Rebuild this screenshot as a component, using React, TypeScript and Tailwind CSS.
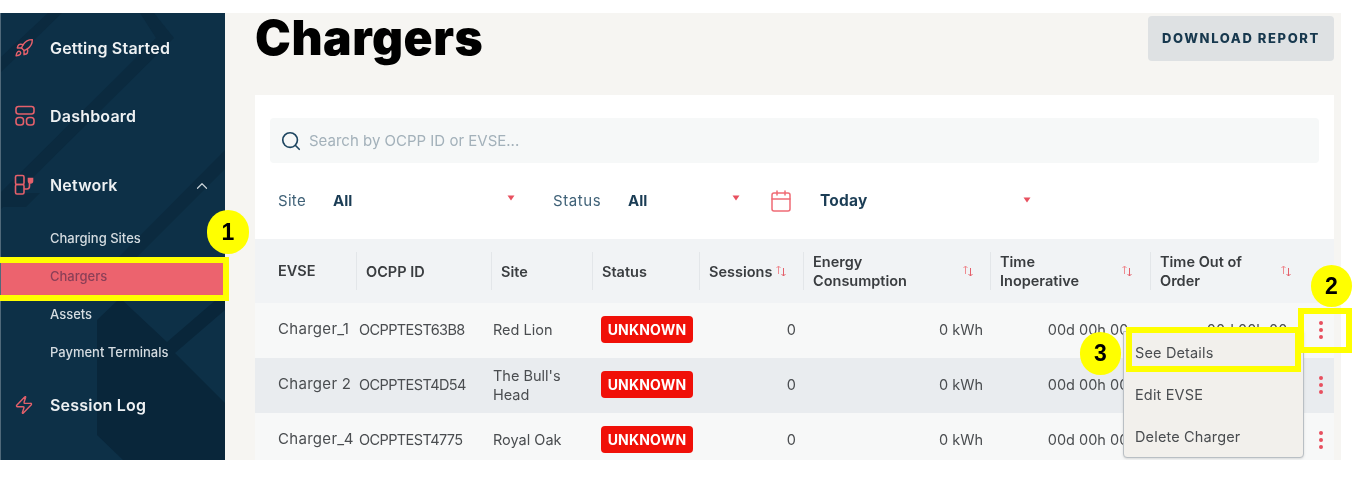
import React from "react";
import { Rocket, Zap, ChevronUp, Search, Calendar } from "lucide-react";

const font = { fontFamily: "Inter, 'Open Sans', sans-serif" };

function DashIcon() {
  return (
    <svg width="22" height="22" viewBox="0 0 22 22" fill="none" stroke="#e4606b" strokeWidth="1.6">
      <rect x="2" y="1.5" width="18" height="7.5" rx="2.5" />
      <rect x="2" y="12.5" width="7.5" height="7.5" rx="2.8" />
      <rect x="12.5" y="12.5" width="7.5" height="7.5" rx="2.8" />
    </svg>
  );
}
function NetworkIcon() {
  return (
    <svg width="22" height="22" viewBox="0 0 22 22" fill="none" stroke="#e4606b" strokeWidth="1.6">
      <rect x="1.5" y="1.5" width="8.5" height="9" rx="1.5" />
      <rect x="1.5" y="10.5" width="8.5" height="9.5" rx="1.5" />
      <path d="M10 15h3c2 0 2.5-1.5 2.5-3V9" />
      <path d="M14.5 4.5h4v2.5a2 2 0 0 1-4 0z" fill="#e4606b" />
    </svg>
  );
}
function SortIcon() {
  return (
    <svg width="12" height="14" viewBox="0 0 12 14" fill="none" strokeWidth="1">
      <path d="M3.5 10V2M1.5 4l2-2 2 2" stroke="#ef8a90" />
      <path d="M8.5 4v8M6.5 10l2 2 2-2" stroke="#e4606b" />
    </svg>
  );
}
function Caret({ className }: { className: string }) {
  return (
    <svg className={className} width="8" height="6" viewBox="0 0 8 6">
      <path d="M0.5 0.5h7L4 5.5z" fill="#e8505f" />
    </svg>
  );
}
function Dots() {
  return (
    <div className="flex flex-col gap-[3px] items-center">
      <span className="w-[4px] h-[4px] rounded-full bg-[#e8505f]" />
      <span className="w-[4px] h-[4px] rounded-full bg-[#e8505f]" />
      <span className="w-[4px] h-[4px] rounded-full bg-[#e8505f]" />
    </div>
  );
}
function Marker({ n, className }: { n: string; className: string }) {
  return (
    <div className={`absolute rounded-full bg-[#ffff00] flex items-center justify-center text-black text-[23px] font-bold ${className}`} style={{ fontFamily: "'Liberation Sans', sans-serif" }}>
      {n}
    </div>
  );
}

const GRID = "grid grid-cols-[101px_135px_101px_107px_104px_187px_160px_158px_26px] items-center";

function HeadCell({ children, sort, pl }: { children: React.ReactNode; sort?: string; pl: string }) {
  return (
    <div className={`relative h-[38px] flex items-center border-l border-[#e3e6e9] ${pl} text-[14.5px] leading-[19px] font-semibold text-[#3a3d40]`}>
      <span>{children}</span>
      {sort && <span className={`absolute top-1/2 -translate-y-1/2 ${sort}`}><SortIcon /></span>}
    </div>
  );
}

const rows = [
  { evse: "Charger_1", id: "OCPPTEST63B8", site: "Red Lion", bg: "bg-[#f7f8f8]" },
  { evse: "Charger 2", id: "OCPPTEST4D54", site: "The Bull's Head", bg: "bg-[#e9ecef]" },
  { evse: "Charger_4", id: "OCPPTEST4775", site: "Royal Oak", bg: "bg-[#f7f8f8]" },
];

function NavMain({ icon, label, right }: { icon: React.ReactNode; label: string; right?: React.ReactNode }) {
  return (
    <div className="h-[68px] flex items-center relative">
      <div className="w-[49px] pl-[13px] flex items-center">{icon}</div>
      <span className="text-[16px] tracking-[0.2px] font-semibold text-[#eef1f3]">{label}</span>
      {right}
    </div>
  );
}

function NavSub({ label, active }: { label: string; active?: boolean }) {
  return (
    <div className={`h-[38px] flex items-center pl-[49px] text-[13px] font-medium ${active ? "text-[#8a3f57] bg-[#ec636e]" : "text-[#d5dce1]"}`}>
      {label}
    </div>
  );
}

export default function App() {
  return (
    <div className="relative w-[1358px] h-[484px] bg-white overflow-hidden pt-[13px] blur-[0.45px]" style={font}>
      <div className="relative flex w-[1341px] h-[447px] overflow-hidden bg-[#f6f5f2]">
        {/* Sidebar */}
        <aside className="relative w-[225px] shrink-0 bg-[#0d3047] overflow-hidden border-l border-[#50697a]">
          <svg className="absolute -left-px top-0" width="225" height="447" viewBox="0 13 225 447">
            <path d="M48 13h14L0 73V58zM140 13h14l20 25L0 210v-17L156 38z" fill="#0b2a3f" />
            <path d="M0 193h40l-14 14H0z" fill="#0b2a3f" />
            <path d="M225 150v19L118 276l-8-10z" fill="#0b2a3f" />
            <path d="M97 460V320l23-22 47 44 58-50v18l-50 43 50 50v57z" fill="#09263a" />
            <path d="M97 435l26 25H97z" fill="#0d3047" />
          </svg>
          <div className="relative pt-[1px]">
            <NavMain icon={<Rocket size={20} color="#e4606b" strokeWidth={1.7} />} label="Getting Started" />
            <NavMain icon={<DashIcon />} label="Dashboard" />
            <div className="mt-[1px]">
              <NavMain
                icon={<NetworkIcon />}
                label="Network"
                right={<ChevronUp size={18} color="#c9d2d8" strokeWidth={1.6} className="absolute right-[14px] top-[26px]" />}
              />
            </div>
            <div className="mt-[1px]">
              <NavSub label="Charging Sites" />
              <NavSub label="Chargers" active />
              <NavSub label="Assets" />
              <NavSub label="Payment Terminals" />
            </div>
            <div className="-mt-[1px]">
              <NavMain icon={<Zap size={20} color="#e4606b" strokeWidth={1.7} />} label="Session Log" />
            </div>
          </div>
        </aside>

        {/* Main */}
        <main className="flex-1 min-w-0 pl-[30px] pr-[7px]">
          <div className="flex justify-between h-[82px]">
            <h1 className="text-[48px] leading-[50px] font-black text-black tracking-[0.5px]">Chargers</h1>
            <button className="mt-[3px] w-[186px] h-[45px] rounded bg-[#dee1e3] text-[#17384e] text-[13px] font-extrabold tracking-[1.6px]">
              DOWNLOAD REPORT
            </button>
          </div>
          <section className="bg-white h-[365px] overflow-hidden pt-[23px]">
            <div className="mx-[15px] h-[45px] rounded bg-[#f6f8f8] flex items-center pl-[10px] gap-[7px]">
              <Search size={22} color="#1d4560" strokeWidth={1.8} />
              <span className="text-[15px] text-[#a3b1ba] pt-[1px]">Search by OCPP ID or EVSE...</span>
            </div>
            <div className="relative h-[76px] flex items-center pl-[23px] text-[15px]">
              <span className="w-[55px] text-[#3f6177] tracking-[0.3px]">Site</span>
              <span className="w-[220px] font-bold text-[#1b3d55] relative">All<Caret className="absolute left-[174px] top-[5px]" /></span>
              <span className="w-[75px] text-[#3f6177] tracking-[0.6px]">Status</span>
              <span className="w-[141px] font-bold text-[#1b3d55] relative">All<Caret className="absolute left-[104px] top-[5px]" /></span>
              <Calendar size={24} color="#ef6b75" strokeWidth={1.5} />
              <span className="ml-[27px] font-bold text-[15.5px] tracking-[0.2px] text-[#1b3d55] relative">Today<Caret className="absolute left-[203px] top-[8px]" /></span>
            </div>
            <div className={`${GRID} h-[64px] bg-[#f1f3f5]`}>
              <div className="pl-[23px] text-[14.5px] font-semibold text-[#3a3d40]">EVSE</div>
              <HeadCell pl="pl-[9px]">OCPP ID</HeadCell>
              <HeadCell pl="pl-[9px]">Site</HeadCell>
              <HeadCell pl="pl-[9px]">Status</HeadCell>
              <HeadCell pl="pl-[9px]" sort="left-[75px]">Sessions</HeadCell>
              <HeadCell pl="pl-[9px]" sort="left-[158px]">Energy<br />Consumption</HeadCell>
              <HeadCell pl="pl-[9px]" sort="left-[130px]">Time<br />Inoperative</HeadCell>
              <HeadCell pl="pl-[9px]" sort="left-[129px]">Time Out of<br />Order</HeadCell>
              <div />
            </div>
            {rows.map((r) => (
              <div key={r.id} className={`${GRID} ${r.bg} h-[55px] pb-[2px] text-[14.5px] text-[#4a4d50]`}>
                <div className="pl-[23px] whitespace-nowrap text-[15px] tracking-[0.3px]">{r.evse}</div>
                <div className="pl-[3px] whitespace-nowrap tracking-[-0.6px]">{r.id}</div>
                <div className="pl-[2px] pr-[14px] leading-[19px]">{r.site}</div>
                <div className="pl-[9px] flex">
                  <span className="inline-flex w-[92px] h-[27px] items-center justify-center rounded bg-[#f01008] text-white text-[14px] font-bold tracking-[0.2px]">UNKNOWN</span>
                </div>
                <div className="text-right pr-[7px]">0</div>
                <div className="text-right pr-[7px]">0 kWh</div>
                <div className="text-right pr-[9px] whitespace-nowrap">00d 00h 00m</div>
                <div className="text-right pr-[8px] whitespace-nowrap">00d 00h 00m</div>
                <div className="flex justify-center"><Dots /></div>
              </div>
            ))}
          </section>
        </main>

        {/* Menu */}
        <div className="absolute left-[1123px] top-[318px] w-[181px] h-[127px] bg-[#f2f0ec] border border-[#b9bfc4] rounded-b-sm shadow-sm text-[14.5px] tracking-[0.15px] text-[#4a4d50] flex flex-col pl-[11px]">
          <div className="h-[42px] shrink-0 flex items-center">See Details</div>
          <div className="h-[42px] shrink-0 flex items-center">Edit EVSE</div>
          <div className="h-[42px] shrink-0 flex items-center">Delete Charger</div>
        </div>

        {/* Annotations */}
        <div className="absolute left-0 top-[244px] w-[229px] h-[44px] border-y-[6px] border-r-[6px] border-[#ffff00]" />
        <div className="absolute left-[1126px] top-[314px] w-[175px] h-[45px] border-[6px] border-[#ffff00]" />
        <Marker n="1" className="left-[207px] top-[197px] w-[42px] h-[44px]" />
        <Marker n="3" className="left-[1080px] top-[319px] w-[41px] h-[43px]" />
      </div>
      <div className="absolute left-[1298px] top-[308px] w-[54px] h-[45px] border-[6px] border-[#ffff00]" />
      <Marker n="2" className="left-[1311px] top-[265px] w-[41px] h-[42px]" />
    </div>
  );
}
